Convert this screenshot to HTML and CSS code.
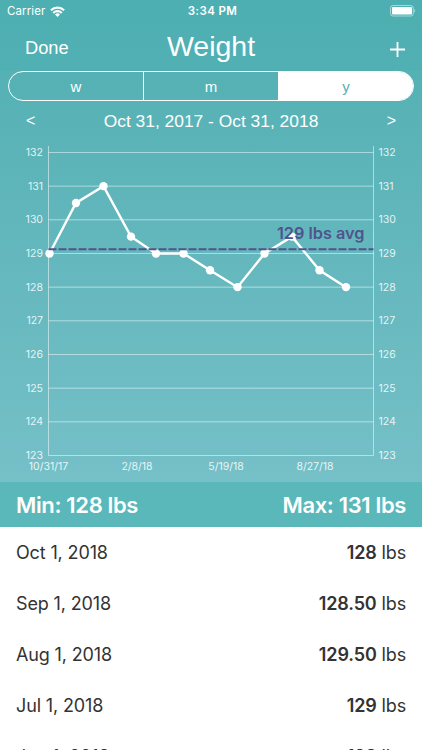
FILE: index.html
```html
<!DOCTYPE html>
<html lang="en">
<head>
  <meta charset="UTF-8" />
  <meta name="viewport" content="width=device-width,initial-scale=1" />
  <title>Weight</title>
  <link rel="stylesheet" href="styles.css">
</head>
<body>

  <!-- Status bar + title -->
  <header id="top">
    <div id="status">
      <div class="carrier">
        <span>Carrier</span>
        <svg width="15" height="11" viewBox="0 0 15 11" fill="none" stroke="#fff" stroke-width="2.1">
          <path d="M.9 4.3a9.4 9.4 0 0 1 13.2 0"/>
          <path d="M3.2 6.9a6.1 6.1 0 0 1 8.6 0"/>
          <path d="M7.5 11L5 8.6a3.5 3.5 0 0 1 5 0z" fill="#fff" stroke="none"/>
        </svg>
      </div>
      <span class="clock">3:34 PM</span>
      <svg class="battery" width="26" height="12" viewBox="0 0 26 12">
        <rect x=".5" y=".5" width="22.8" height="10.5" rx="2.5" fill="none" stroke="#fff" stroke-opacity=".5"/>
        <rect x="2" y="2" width="20" height="7.5" rx="1" fill="#fff"/>
        <path d="M24.3 4v3.6q1.1-.5 1.1-1.8t-1.1-1.8z" fill="#fff" fill-opacity=".5"/>
      </svg>
    </div>
    <nav id="nav">
      <span class="done">Done</span>
      <h1>Weight</h1>
      <svg class="add" width="16" height="16" viewBox="0 0 16 16" stroke="#fff" stroke-width="1.8">
        <path d="M8.5 1v15M1 8.5h15"/>
      </svg>
    </nav>
  </header>

  <!-- Range + chart -->
  <main id="panel">
    <div id="range">
      <span>w</span><span>m</span><span class="active">y</span>
    </div>
    <div id="period">
      <span>&lt;</span>
      <span class="dates">Oct 31, 2017 - Oct 31, 2018</span>
      <span>&gt;</span>
    </div>
    <svg id="chart" width="422" height="341" viewBox="0 141 422 341"></svg>
  </main>

  <div id="summary">
    <span>Min: 128 lbs</span>
    <span>Max: 131 lbs</span>
  </div>

  <ul id="entries">
    <li><span>Oct 1, 2018</span><span><b>128</b> lbs</span></li>
    <li><span>Sep 1, 2018</span><span><b>128.50</b> lbs</span></li>
    <li><span>Aug 1, 2018</span><span><b>129.50</b> lbs</span></li>
    <li><span>Jul 1, 2018</span><span><b>129</b> lbs</span></li>
    <li><span>Jun 1, 2018</span><span><b>128</b> lbs</span></li>
  </ul>

  <script src="chart.js"></script>
</body>
</html>
```
FILE: styles.css
```css
body {
  margin: 0; height: 750px; overflow: hidden; background: #fff; color: #fff;
  font-family: Inter, sans-serif;
}

/* Header */
#top {
  height: 71px;
  background: linear-gradient(#4dafb1, #51b0b3);
}
#status {
  display: grid; grid-template-columns: 1fr auto 1fr; align-items: center;
  height: 22px; padding: 0 6px 0 7px;
  font-size: 11.5px;
}
.carrier { display: flex; align-items: center; gap: 5px; letter-spacing: .1px; }
.clock { font-weight: 600; letter-spacing: .4px; margin-left: 2px; }
.battery { justify-self: end; }
#nav {
  display: grid; grid-template-columns: 1fr auto 1fr; align-items: center;
  height: 49px; padding: 0 17px;
  font-family: "Liberation Sans", sans-serif;
}
#nav h1 { margin: 0; font-size: 28.5px; font-weight: 400; line-height: 49px; }
.done { padding: 2px 0 0 8px; font-size: 18.3px; }
.add { justify-self: end; margin-top: 4px; }

/* Range switch */
#panel {
  height: 411px;
  background: linear-gradient(#55b1b4, #76c0c8);
}
#range {
  display: grid; grid-template-columns: 134px 135px 1fr;
  box-sizing: border-box; height: 30px; margin: 0 8px; overflow: hidden;
  border: 1px solid #fff; border-radius: 16px;
  font: 15px/29px "Liberation Sans", sans-serif; text-align: center;
}
#range span + span { border-left: 1px solid #fff; }
#range .active { background: #fff; color: #55b1b4; }
#period {
  display: flex; justify-content: space-between; align-items: center;
  height: 40px; padding: 0 26px;
  font: 16px "Liberation Sans", sans-serif;
}
.dates { font-size: 17.4px; }
#chart { display: block; }
.grid { stroke: #fff; stroke-opacity: .5; }
.tick { fill: #fff; fill-opacity: .85; font-size: 10.5px; }
.tick.left { text-anchor: end; }
.tick.date { text-anchor: middle; }
.line { fill: none; stroke: #fff; stroke-width: 2.4; }
.dot { fill: #fff; }
.avg-line { stroke: #51538c; stroke-width: 2; stroke-dasharray: 8 2; }
.avg-label { fill: #51538c; font-size: 16.3px; font-weight: 600; text-anchor: end; }

/* Min / max */
#summary {
  display: flex; justify-content: space-between; align-items: center;
  height: 45px; padding: 0 16px; background: #5ab7ba;
  font-size: 22px; font-weight: 600; letter-spacing: -.35px;
}

/* Entries */
#entries {
  margin: 0; padding: 0 16px; list-style: none;
  color: #333; font-size: 18px; letter-spacing: -.14px;
}
#entries li { display: flex; justify-content: space-between; height: 51px; line-height: 51px; }
#entries b { font-weight: 600; }
```
FILE: chart.js
```javascript
const chart = document.getElementById('chart');
const LEFT = 48.5, RIGHT = 373.5, BOTTOM = 455.5, STEP = 33.67, MIN = 123, MAX = 132;
const points = [
  [49.5,129],[76,130.5],[103.5,131],[131,129.5],[156,129],[183.5,129],
  [210,128.5],[237.5,128],[264.5,129],[292,129.5],[319.5,128.5],[346,128]
];
const dates = [[48.5,'10/31/17'],[137,'2/8/18'],[226,'5/19/18'],[315,'8/27/18']];

const y = v => BOTTOM - (v - MIN) * STEP;
let out = '';

// grid and axis labels
for (let v = MIN; v <= MAX; v++) {
  out += `<path class="grid" d="M${LEFT} ${y(v)}H${RIGHT}"/>
    <text class="tick left" x="43" y="${y(v) + 3.5}">${v}</text>
    <text class="tick" x="378.5" y="${y(v) + 3.5}">${v}</text>`;
}
out += `<path class="grid" d="M${LEFT} 146V${BOTTOM}M${RIGHT} 146V${BOTTOM}"/>`;
dates.forEach(([x, label]) => {
  out += `<text class="tick date" x="${x}" y="469.5">${label}</text>`;
});

// readings
out += `<polyline class="line" points="${points.map(([x, v]) => x + ',' + y(v)).join(' ')}"/>`;
points.forEach(([x, v]) => {
  out += `<circle class="dot" cx="${x}" cy="${y(v)}" r="4.2"/>`;
});

// average
out += `<path class="avg-line" d="M${LEFT} 249.3H${RIGHT}"/>
  <text class="avg-label" x="364.5" y="238.5">129 lbs avg</text>`;

chart.innerHTML = out;
```
